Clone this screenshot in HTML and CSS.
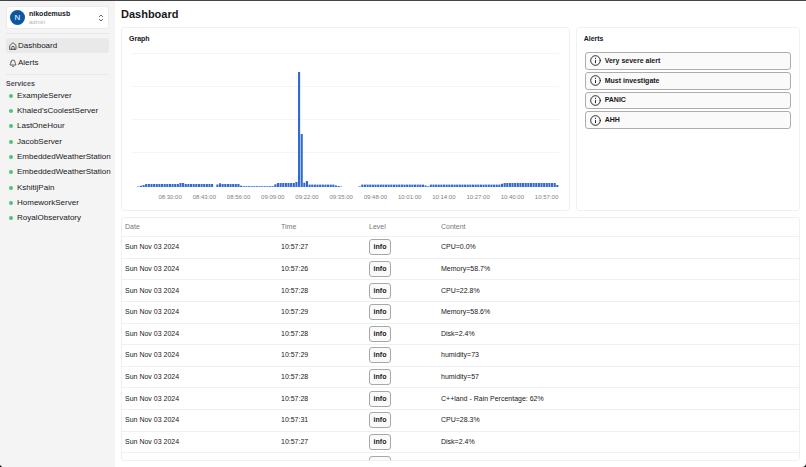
FILE: index.html
```html
<!DOCTYPE html>
<html lang="en">

<head>
  <meta charset="UTF-8">
  <meta name="viewport" content="width=device-width, initial-scale=1.0">
  <title>Dashboard</title>
  <link rel="stylesheet" href="styles.css">
</head>

<body>
  <div class="app">
    <aside class="sidebar">
      <button type="button" class="user">
        <span class="avatar">N</span>
        <span class="user-info">
          <span class="user-name">nikodemusb</span>
          <span class="user-role">admin</span>
        </span>
        <svg class="user-arrows" viewBox="0 0 24 24"><path d="m7 16 5 5 5-5M7 8l5-5 5 5" /></svg>
      </button>
      <nav class="nav">
        <a href="#" class="nav-link active">
          <svg class="icon" viewBox="0 0 24 24"><path d="M3 10 12 2l9 8v12H3zM8 22v-5a4 4 0 0 1 8 0v5" /></svg>
          Dashboard
        </a>
        <a href="#" class="nav-link">
          <svg class="icon" viewBox="0 0 24 24"><path d="M6 9a6 6 0 0 1 12 0c0 6 3 7 3 9H3c0-2 3-3 3-9M10 22h4" /></svg>
          Alerts
        </a>
      </nav>
      <h2 class="services-title">Services</h2>
      <ul class="services">
        <li><a href="#">ExampleServer</a></li>
        <li><a href="#">Khaled'sCoolestServer</a></li>
        <li><a href="#">LastOneHour</a></li>
        <li><a href="#">JacobServer</a></li>
        <li><a href="#">EmbeddedWeatherStation</a></li>
        <li><a href="#">EmbeddedWeatherStation</a></li>
        <li><a href="#">KshitijPain</a></li>
        <li><a href="#">HomeworkServer</a></li>
        <li><a href="#">RoyalObservatory</a></li>
      </ul>
    </aside>

    <main class="main">
      <h1 class="title">Dashboard</h1>
      <div class="cards">
        <section class="card">
          <h2 class="card-title">Graph</h2>
          <div class="plot">
            <svg id="bars" class="bars" viewBox="0 0 160 134" preserveAspectRatio="none"></svg>
          </div>
          <div class="ticks">
            <span>08:30:00</span>
            <span>08:43:00</span>
            <span>08:56:00</span>
            <span>09:09:00</span>
            <span>09:22:00</span>
            <span>09:35:00</span>
            <span>09:48:00</span>
            <span>10:01:00</span>
            <span>10:14:00</span>
            <span>10:27:00</span>
            <span>10:40:00</span>
            <span>10:57:00</span>
          </div>
        </section>
        <section class="card">
          <h2 class="card-title">Alerts</h2>
          <ul class="alerts">
            <li class="alert">
              <svg class="alert-icon" viewBox="0 0 24 24"><circle cx="12" cy="12" r="10.500" /><path d="M12 17v-5M12 8v-1" /></svg>
              Very severe alert
            </li>
            <li class="alert">
              <svg class="alert-icon" viewBox="0 0 24 24"><circle cx="12" cy="12" r="10.500" /><path d="M12 17v-5M12 8v-1" /></svg>
              Must investigate
            </li>
            <li class="alert">
              <svg class="alert-icon" viewBox="0 0 24 24"><circle cx="12" cy="12" r="10.500" /><path d="M12 17v-5M12 8v-1" /></svg>
              PANIC
            </li>
            <li class="alert">
              <svg class="alert-icon" viewBox="0 0 24 24"><circle cx="12" cy="12" r="10.500" /><path d="M12 17v-5M12 8v-1" /></svg>
              AHH
            </li>
          </ul>
        </section>
      </div>

      <div class="logs">
        <table class="log-table">
          <thead>
            <tr>
              <th class="col-date">Date</th>
              <th class="col-time">Time</th>
              <th class="col-level">Level</th>
              <th>Content</th>
            </tr>
          </thead>
          <tbody>
            <tr><td>Sun Nov 03 2024</td><td>10:57:27</td><td><span class="badge">info</span></td><td>CPU=0.0%</td></tr>
            <tr><td>Sun Nov 03 2024</td><td>10:57:26</td><td><span class="badge">info</span></td><td>Memory=58.7%</td></tr>
            <tr><td>Sun Nov 03 2024</td><td>10:57:28</td><td><span class="badge">info</span></td><td>CPU=22.8%</td></tr>
            <tr><td>Sun Nov 03 2024</td><td>10:57:29</td><td><span class="badge">info</span></td><td>Memory=58.6%</td></tr>
            <tr><td>Sun Nov 03 2024</td><td>10:57:28</td><td><span class="badge">info</span></td><td>Disk=2.4%</td></tr>
            <tr><td>Sun Nov 03 2024</td><td>10:57:29</td><td><span class="badge">info</span></td><td>humidity=73</td></tr>
            <tr><td>Sun Nov 03 2024</td><td>10:57:28</td><td><span class="badge">info</span></td><td>humidity=57</td></tr>
            <tr><td>Sun Nov 03 2024</td><td>10:57:28</td><td><span class="badge">info</span></td><td>C++land - Rain Percentage: 62%</td></tr>
            <tr><td>Sun Nov 03 2024</td><td>10:57:31</td><td><span class="badge">info</span></td><td>CPU=28.3%</td></tr>
            <tr><td>Sun Nov 03 2024</td><td>10:57:27</td><td><span class="badge">info</span></td><td>Disk=2.4%</td></tr>
            <tr><td></td><td></td><td><span class="badge"></span></td><td></td></tr>
          </tbody>
        </table>
      </div>
    </main>
  </div>
  <script src="chart.js"></script>
</body>

</html>
```
FILE: styles.css
```css
* {
  box-sizing: border-box;
}

html {
  background: #000;
}

body {
  margin: 0;
  font-family: "Liberation Sans", Arial, sans-serif;
  font-size: 7px;
  line-height: 8px;
  color: #18181b;
}

h1,
h2,
ul {
  margin: 0;
  padding: 0;
}

ul {
  list-style: none;
}

a {
  color: inherit;
  text-decoration: none;
}

svg {
  flex-shrink: 0;
  fill: none;
  stroke: currentColor;
  stroke-width: 2;
  stroke-linecap: round;
  stroke-linejoin: round;
}

.app {
  display: flex;
  height: 100vh;
  overflow: hidden;
  border-top: 1px solid #444;
  border-radius: 0 0 4px 4px;
  background: #fff;
}

/* sidebar */
.sidebar {
  flex: 0 0 115px;
  min-width: 0;
  padding: 5px 6px;
  background: #f4f4f5;
}

.user {
  display: flex;
  align-items: center;
  gap: 4px;
  width: 100%;
  height: 23px;
  padding: 0 3px;
  border: 1px solid #ececee;
  border-radius: 3px;
  background: #fff;
  color: inherit;
  font: inherit;
  text-align: left;
}

.avatar {
  width: 15px;
  height: 15px;
  border-radius: 50%;
  background: #0d57a0;
  color: #fff;
  font-size: 8px;
  line-height: 15px;
  text-align: center;
}

.user-info {
  flex: 1;
}

.user-name,
.user-role {
  display: block;
}

.user-name {
  font-weight: bold;
}

.user-role {
  color: #b4b4b8;
  font-size: 6px;
}

.user-arrows {
  width: 8px;
  height: 8px;
}

.nav {
  margin-top: 4px;
  padding: 4px 0;
  border-top: 1px solid #e8e8ea;
  border-bottom: 1px solid #e8e8ea;
}

.nav-link {
  display: flex;
  align-items: center;
  gap: 1px;
  height: 15px;
  padding: 0 3px;
  border-radius: 2px;
  font-size: 8px;
}

.nav-link + .nav-link {
  margin-top: 2px;
}

.nav-link.active {
  background: #e9e9ea;
}

.icon {
  width: 8px;
  height: 8px;
}

.services-title {
  margin-top: 5px;
  color: #52525b;
  font-size: 7px;
}

.services {
  display: flex;
  flex-direction: column;
  height: 138px;
}

.services li {
  display: flex;
  flex: 1;
  align-items: center;
  font-size: 8px;
}

.services li::before {
  content: "";
  flex-shrink: 0;
  width: 4px;
  height: 4px;
  margin: 0 4px 0 3px;
  border-radius: 50%;
  background: #4fc17c;
}

/* content */
.main {
  display: flex;
  flex: 1;
  flex-direction: column;
  min-width: 0;
  padding: 6px;
}

.title {
  margin-bottom: 6px;
  font-size: 11px;
  line-height: 14px;
}

.cards {
  display: grid;
  grid-template-columns: 2fr 1fr;
  gap: 6px;
  margin-bottom: 6px;
}

.card {
  height: 184px;
  padding: 7px;
  border: 1px solid #f0f0f1;
  border-radius: 3px;
}

.card-title {
  font-size: 7px;
}

.plot {
  height: 134px;
  margin: 10px 3px 0 3px;
  padding-left: 5px;
  background: repeating-linear-gradient(#f5f5f5 0 1px, transparent 1px 33px) no-repeat;
  background-size: 100% 100px;
}

.bars {
  display: block;
  width: 100%;
  height: 100%;
  fill: #3069cf;
  stroke: none;
}

.ticks {
  display: grid;
  grid-template-columns: repeat(12, 1fr);
  margin: 6px -2px 0 24px;
  color: #808085;
  font-size: 6px;
  text-align: center;
}

.alerts {
  display: grid;
  grid-auto-rows: 1fr;
  gap: 2px;
  height: 77px;
  margin: 9px 1px 0;
}

.alert {
  display: flex;
  align-items: center;
  gap: 4px;
  padding: 0 4px;
  border: 1px solid #adadad;
  border-radius: 3px;
  background: #fafafa;
  font-weight: bold;
}

.alert-icon {
  width: 11px;
  height: 11px;
}

/* logs */
.logs {
  flex: 1;
  min-height: 0;
  overflow: hidden;
  border: 1px solid #f0f0f1;
  border-radius: 3px;
}

.log-table {
  width: 100%;
  height: 257px;
  border-spacing: 0;
  table-layout: fixed;
}

.log-table th,
.log-table td {
  padding: 0 3px;
  border-bottom: 1px solid #f0f0f1;
  text-align: left;
}

.log-table th {
  height: 19px;
  color: #77777a;
  font-weight: normal;
}

.col-date {
  width: 156px;
}

.col-time {
  width: 88px;
}

.col-level {
  width: 72px;
}

.badge {
  display: block;
  width: 22px;
  height: 16px;
  border: 1px solid #a8a8a8;
  border-radius: 3px;
  background: #fafafa;
  font-weight: bold;
  line-height: 14px;
  text-align: center;
}
```
FILE: chart.js
```javascript
// [number of minutes, bar height]
const runs = [
  [1, 0.5], [1, 1.2], [1, 2], [13, 3], [2, 4], [11, 3], [1, 0],
  [1, 2.5], [1, 3.7], [7, 3], [1, 1.3], [12, 0.8], [1, 2.7], [7, 4],
  [1, 5], [1, 115], [1, 53], [1, 4.3], [1, 6], [10, 2.4], [1, 1.5],
  [1, 1], [1, 0.4], [6, 0], [1, 0.6], [24, 2.4], [1, 1.5], [1, 0.7],
  [27, 2.4], [1, 3.2], [20, 4], [1, 2]
];

const bars = document.getElementById("bars");
let x = 0;
runs.forEach(function (run) {
  for (let i = 0; i < run[0]; i++) {
    const rect = document.createElementNS("http://www.w3.org/2000/svg", "rect");
    rect.setAttribute("x", x + 0.1);
    rect.setAttribute("y", 134 - run[1]);
    rect.setAttribute("width", 0.8);
    rect.setAttribute("height", run[1]);
    bars.appendChild(rect);
    x++;
  }
});
```
